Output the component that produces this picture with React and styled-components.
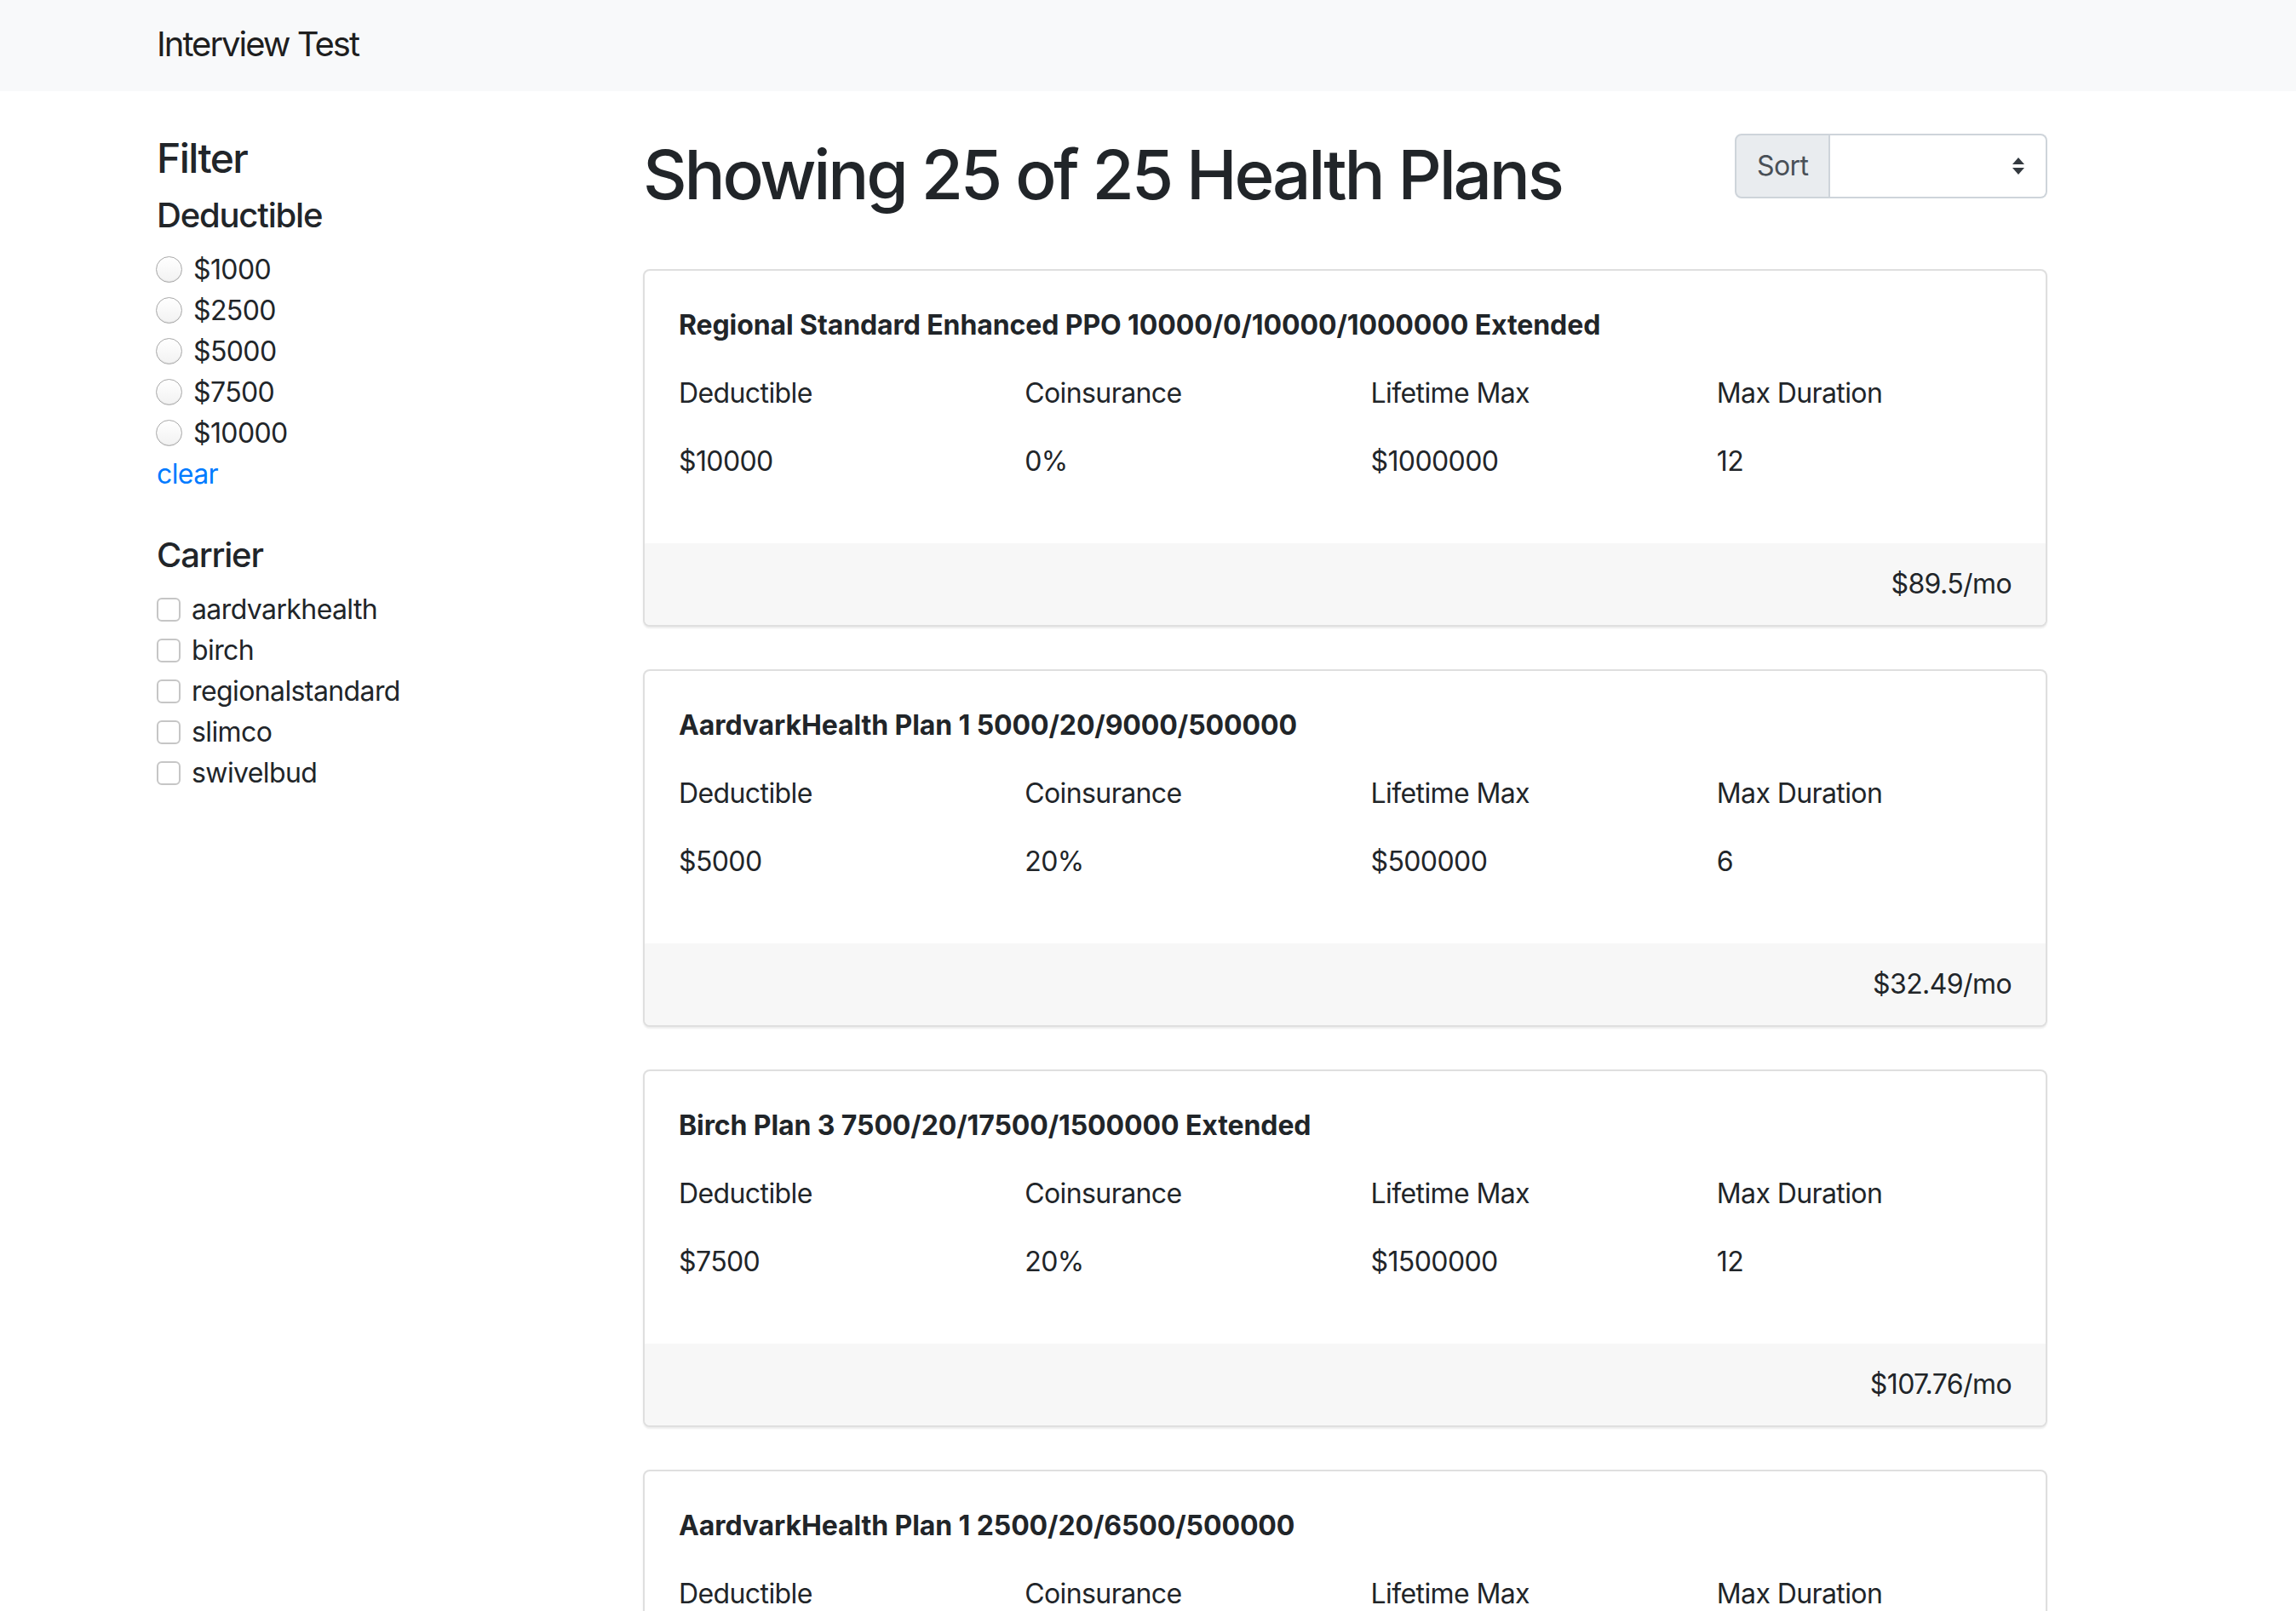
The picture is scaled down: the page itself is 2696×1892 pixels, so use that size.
import React from "react";
import styled, { createGlobalStyle } from "styled-components";

const GlobalStyle = createGlobalStyle`
  * { box-sizing: border-box; }
  html, body { margin: 0; padding: 0; background: #fff; }
  body {
    font-family: Inter, "Noto Sans", "Liberation Sans", sans-serif;
    font-size: 32px;
    line-height: 1.5;
    letter-spacing: -0.6px;
    color: #212529;
  }
`;

const Navbar = styled.nav`
  background: #f8f9fa;
  height: 107px;
  display: flex;
  align-items: center;
`;

const Container = styled.div`
  width: 2220px;
  margin-left: 184px;
`;

const Brand = styled.div`
  font-size: 40px;
  line-height: 60px;
  letter-spacing: -2px;
  color: rgba(0, 0, 0, 0.9);
  padding-bottom: 4px;
`;

const Layout = styled.div`
  display: grid;
  grid-template-columns: 511px 1649px;
  column-gap: 60px;
  padding-top: 50px;
`;

const Sidebar = styled.aside`
  display: flex;
  flex-direction: column;
`;

const FilterTitle = styled.h4`
  margin: 0 0 14px;
  font-size: 48px;
  font-weight: 500;
  line-height: 1.2;
  letter-spacing: -1.6px;
`;

const GroupTitle = styled.h5`
  margin: 0 0 16px;
  font-size: 40px;
  font-weight: 500;
  line-height: 1.2;
  letter-spacing: -1.2px;
`;

const Group = styled.div`
  display: flex;
  flex-direction: column;
  margin-bottom: ${(p) => p.$gap || 0}px;
`;

const OptionRow = styled.label`
  display: flex;
  align-items: center;
  height: 48px;
  gap: 13px;
`;

const Radio = styled.input.attrs({ type: "radio" })`
  appearance: none;
  margin: 0 0 0 -1px;
  width: 31px;
  height: 31px;
  border-radius: 50%;
  border: 1.5px solid #a9a9a9;
  background: linear-gradient(#ffffff, #f2f2f2);
  box-shadow: inset 0 -1px 1px rgba(0, 0, 0, 0.08);
  flex: none;
`;

const Checkbox = styled.input.attrs({ type: "checkbox" })`
  appearance: none;
  margin: 0;
  width: 28px;
  height: 28px;
  border-radius: 6px;
  border: 2px solid #c6c6c6;
  background: #fff;
  flex: none;
`;

const ClearLink = styled.a`
  color: #007bff;
  text-decoration: none;
  line-height: 48px;
`;

const Main = styled.main`
  display: flex;
  flex-direction: column;
`;

const MainHeader = styled.div`
  display: flex;
  justify-content: space-between;
  align-items: flex-start;
  margin-bottom: 63px;
`;

const Title = styled.h1`
  margin: 0;
  font-size: 80px;
  font-weight: 500;
  line-height: 1.2;
  letter-spacing: -3.2px;
`;

const InputGroup = styled.div`
  display: flex;
  height: 76px;
  width: 367px;
`;

const Prepend = styled.span`
  display: flex;
  align-items: center;
  padding: 0 24px;
  background: #e9ecef;
  color: #495057;
  border: 2px solid #ced4da;
  border-radius: 8px 0 0 8px;
  font-size: 32px;
`;

const SelectBox = styled.div`
  flex: 1;
  display: flex;
  align-items: center;
  justify-content: flex-end;
  padding-right: 24px;
  border: 2px solid #ced4da;
  border-left: none;
  border-radius: 0 8px 8px 0;
  background: #fff;
`;

const Card = styled.section`
  border: 2px solid rgba(0, 0, 0, 0.125);
  border-radius: 8px;
  background: #fff;
  box-shadow: 0 2px 2px rgba(0, 0, 0, 0.08);
  margin-bottom: 50px;
  overflow: hidden;
`;

const CardBody = styled.div`
  padding: 40px;
`;

const CardTitle = styled.p`
  margin: 0 0 32px;
  font-size: 32px;
  font-weight: 700;
  line-height: 48px;
  letter-spacing: -0.1px;
`;

const StatRow = styled.div`
  display: grid;
  grid-template-columns: repeat(4, 1fr);
  margin: 0 -30px;
`;

const Stat = styled.p`
  margin: 0 0 32px;
  padding: 0 30px;
  line-height: 48px;
`;

const CardFooter = styled.div`
  background: #f7f7f7;
  padding: 24px 40px;
  text-align: right;
  line-height: 48px;
`;

const SortCaret = () => (
  <svg width="16" height="24" viewBox="0 0 16 24">
    <path d="M8 2 L15 10 L1 10 Z" fill="#343a40" />
    <path d="M1 14 L15 14 L8 22 Z" fill="#343a40" />
  </svg>
);

const deductibles = ["$1000", "$2500", "$5000", "$7500", "$10000"];
const carriers = ["aardvarkhealth", "birch", "regionalstandard", "slimco", "swivelbud"];

const plans = [
  {
    name: "Regional Standard Enhanced PPO 10000/0/10000/1000000 Extended",
    deductible: "$10000",
    coins: "0%",
    max: "$1000000",
    duration: "12",
    price: "$89.5/mo",
  },
  {
    name: "AardvarkHealth Plan 1 5000/20/9000/500000",
    deductible: "$5000",
    coins: "20%",
    max: "$500000",
    duration: "6",
    price: "$32.49/mo",
  },
  {
    name: "Birch Plan 3 7500/20/17500/1500000 Extended",
    deductible: "$7500",
    coins: "20%",
    max: "$1500000",
    duration: "12",
    price: "$107.76/mo",
  },
  {
    name: "AardvarkHealth Plan 1 2500/20/6500/500000",
    deductible: "$2500",
    coins: "20%",
    max: "$500000",
    duration: "6",
    price: "$41.12/mo",
  },
];

export default function App() {
  return (
    <>
      <GlobalStyle />
      <Navbar>
        <Container>
          <Brand>Interview Test</Brand>
        </Container>
      </Navbar>
      <Container>
        <Layout>
          <Sidebar>
            <FilterTitle>Filter</FilterTitle>
            <GroupTitle>Deductible</GroupTitle>
            <Group $gap={47}>
              {deductibles.map((d) => (
                <OptionRow key={d}>
                  <Radio name="deductible" />
                  <span>{d}</span>
                </OptionRow>
              ))}
              <ClearLink href="#">clear</ClearLink>
            </Group>
            <GroupTitle>Carrier</GroupTitle>
            <Group>
              {carriers.map((c) => (
                <OptionRow key={c}>
                  <Checkbox />
                  <span>{c}</span>
                </OptionRow>
              ))}
            </Group>
          </Sidebar>
          <Main>
            <MainHeader>
              <Title>Showing 25 of 25 Health Plans</Title>
              <InputGroup>
                <Prepend>Sort</Prepend>
                <SelectBox>
                  <SortCaret />
                </SelectBox>
              </InputGroup>
            </MainHeader>
            {plans.map((p) => (
              <Card key={p.name}>
                <CardBody>
                  <CardTitle>{p.name}</CardTitle>
                  <StatRow>
                    <Stat>Deductible</Stat>
                    <Stat>Coinsurance</Stat>
                    <Stat>Lifetime Max</Stat>
                    <Stat>Max Duration</Stat>
                  </StatRow>
                  <StatRow>
                    <Stat>{p.deductible}</Stat>
                    <Stat>{p.coins}</Stat>
                    <Stat>{p.max}</Stat>
                    <Stat>{p.duration}</Stat>
                  </StatRow>
                </CardBody>
                <CardFooter>{p.price}</CardFooter>
              </Card>
            ))}
          </Main>
        </Layout>
      </Container>
    </>
  );
}
